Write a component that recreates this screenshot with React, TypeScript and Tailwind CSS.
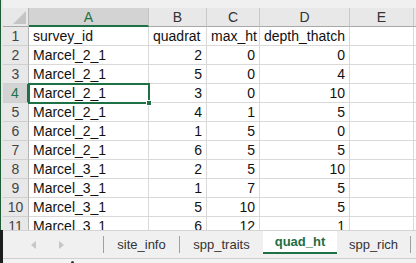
import React from 'react';

const rows: [string, number, number, number][] = [
  ['Marcel_2_1', 2, 0, 0],
  ['Marcel_2_1', 5, 0, 4],
  ['Marcel_2_1', 3, 0, 10],
  ['Marcel_2_1', 4, 1, 5],
  ['Marcel_2_1', 1, 5, 0],
  ['Marcel_2_1', 6, 5, 5],
  ['Marcel_3_1', 2, 5, 10],
  ['Marcel_3_1', 1, 7, 5],
  ['Marcel_3_1', 5, 10, 5],
  ['Marcel_3_1', 6, 12, 1],
];

const cols = ['A', 'B', 'C', 'D', 'E'];

const cell = 'border-r border-b border-[#d9d9d9] px-[4px] leading-[18px] whitespace-nowrap overflow-hidden';
const num = `${cell} text-right`;
const rowHead = 'border-r border-b border-r-[#b4b4b4] border-b-[#d0d0d0] bg-[#e8e8e8] text-center text-[#444] leading-[18px]';

const Sep = () => <span className="w-px h-[17px] self-center bg-[#a0a0a0]" />;

const Tab = ({ label, w }: { label: string; w: string }) => (
  <div className={`${w} flex items-center justify-center text-[13px] text-[#333]`}>{label}</div>
);

const App: React.FC = () => {
  return (
    <div className="w-[416px] h-[263px] overflow-hidden flex bg-[#f0f0f0] text-[14px] text-[#111]" style={{ fontFamily: '"Liberation Sans", Arial, sans-serif' }}>
      {/* strip of the window behind */}
      <div className="w-[3px] flex flex-col">
        <div className="h-[230px] bg-[#e6e6e6] border-l border-[#1d5c36]" />
        <div className="flex-1 bg-[#1b1f1c]" />
      </div>

      <div className="flex-1 flex flex-col">
        <div className="h-[8px] bg-[#f0f0f0]" />

        <div className="relative h-[222px] overflow-hidden bg-white">
          <div className="grid grid-cols-[26px_120px_58px_53px_90px_64px_1fr] auto-rows-[19px]">
            {/* header row */}
            <div className="relative bg-[#e8e8e8] border-r border-b border-r-[#b4b4b4] border-b-[#a8a8a8]">
              <svg className="absolute right-[2px] bottom-[2px]" width="13" height="13" viewBox="0 0 13 13">
                <polygon points="13,0 13,13 0,13" fill="#c4c4c4" />
              </svg>
            </div>
            {cols.map((c) =>
              c === 'A' ? (
                <div key={c} className="bg-[#d3d3d3] border-r border-[#c4c4c4] border-b-2 border-b-[#1e7145] text-center text-[#1e7145] leading-[18px]">
                  {c}
                </div>
              ) : (
                <div key={c} className="bg-[#e8e8e8] border-r border-b border-r-[#c8c8c8] border-b-[#a8a8a8] text-center text-[#333] leading-[18px]">
                  {c}
                </div>
              )
            )}
            <div className="bg-[#e8e8e8] border-b border-[#a8a8a8]" />

            {/* row 1: column names */}
            <div className={rowHead}>1</div>
            <div className={cell}>survey_id</div>
            <div className={cell}>quadrat</div>
            <div className={cell}>max_ht</div>
            <div className={cell}>depth_thatch</div>
            <div className={cell} />
            <div className="border-b border-[#d9d9d9]" />

            {rows.map((r, i) => {
              const n = i + 2;
              const active = n === 4;
              return (
                <React.Fragment key={n}>
                  <div
                    className={
                      active
                        ? 'border-r-2 border-b border-r-[#1e7145] border-b-[#d0d0d0] bg-[#d3d3d3] text-center text-[#1e7145] leading-[18px]'
                        : rowHead
                    }
                  >
                    {n}
                  </div>
                  <div className={cell}>{r[0]}</div>
                  <div className={num}>{r[1]}</div>
                  <div className={num}>{r[2]}</div>
                  <div className={num}>{r[3]}</div>
                  <div className={cell} />
                  <div className="border-b border-[#d9d9d9]" />
                </React.Fragment>
              );
            })}
          </div>

          {/* selected cell A4 */}
          <div className="absolute left-[25px] top-[75px] w-[122px] h-[21px] border-2 border-[#1e7145]" />
          <div className="absolute left-[143px] top-[92px] w-[6px] h-[6px] bg-[#1e7145] border border-white" />
        </div>

        {/* sheet tabs */}
        <div className="h-[28px] flex items-stretch bg-[#f0f0f0] border-t border-[#d4d4d4]">
          <div className="w-[100px] flex items-center">
            <svg className="ml-[28px]" width="6" height="8" viewBox="0 0 6 8">
              <polygon points="5,0 5,8 0,4" fill="#c6c6c6" />
            </svg>
            <svg className="ml-[22px]" width="6" height="8" viewBox="0 0 6 8">
              <polygon points="0,0 0,8 5,4" fill="#c6c6c6" />
            </svg>
          </div>
          <Sep />
          <Tab label="site_info" w="w-[75px]" />
          <Sep />
          <Tab label="spp_traits" w="w-[83px]" />
          <div className="w-[74px] flex items-center justify-center bg-white border-b-2 border-[#1e7145] mb-[4px] text-[13px] font-bold text-[#1e6e42]">
            quad_ht
          </div>
          <Tab label="spp_rich" w="w-[73px]" />
          <Sep />
        </div>
        <div className="flex-1 relative bg-[#f3f3f3] border-t border-[#cfcfcf]">
          <div className="absolute left-[68px] top-[2px] w-[3px] h-[3px] bg-[#333] rounded-full" />
        </div>
      </div>
    </div>
  );
};

export default App;
